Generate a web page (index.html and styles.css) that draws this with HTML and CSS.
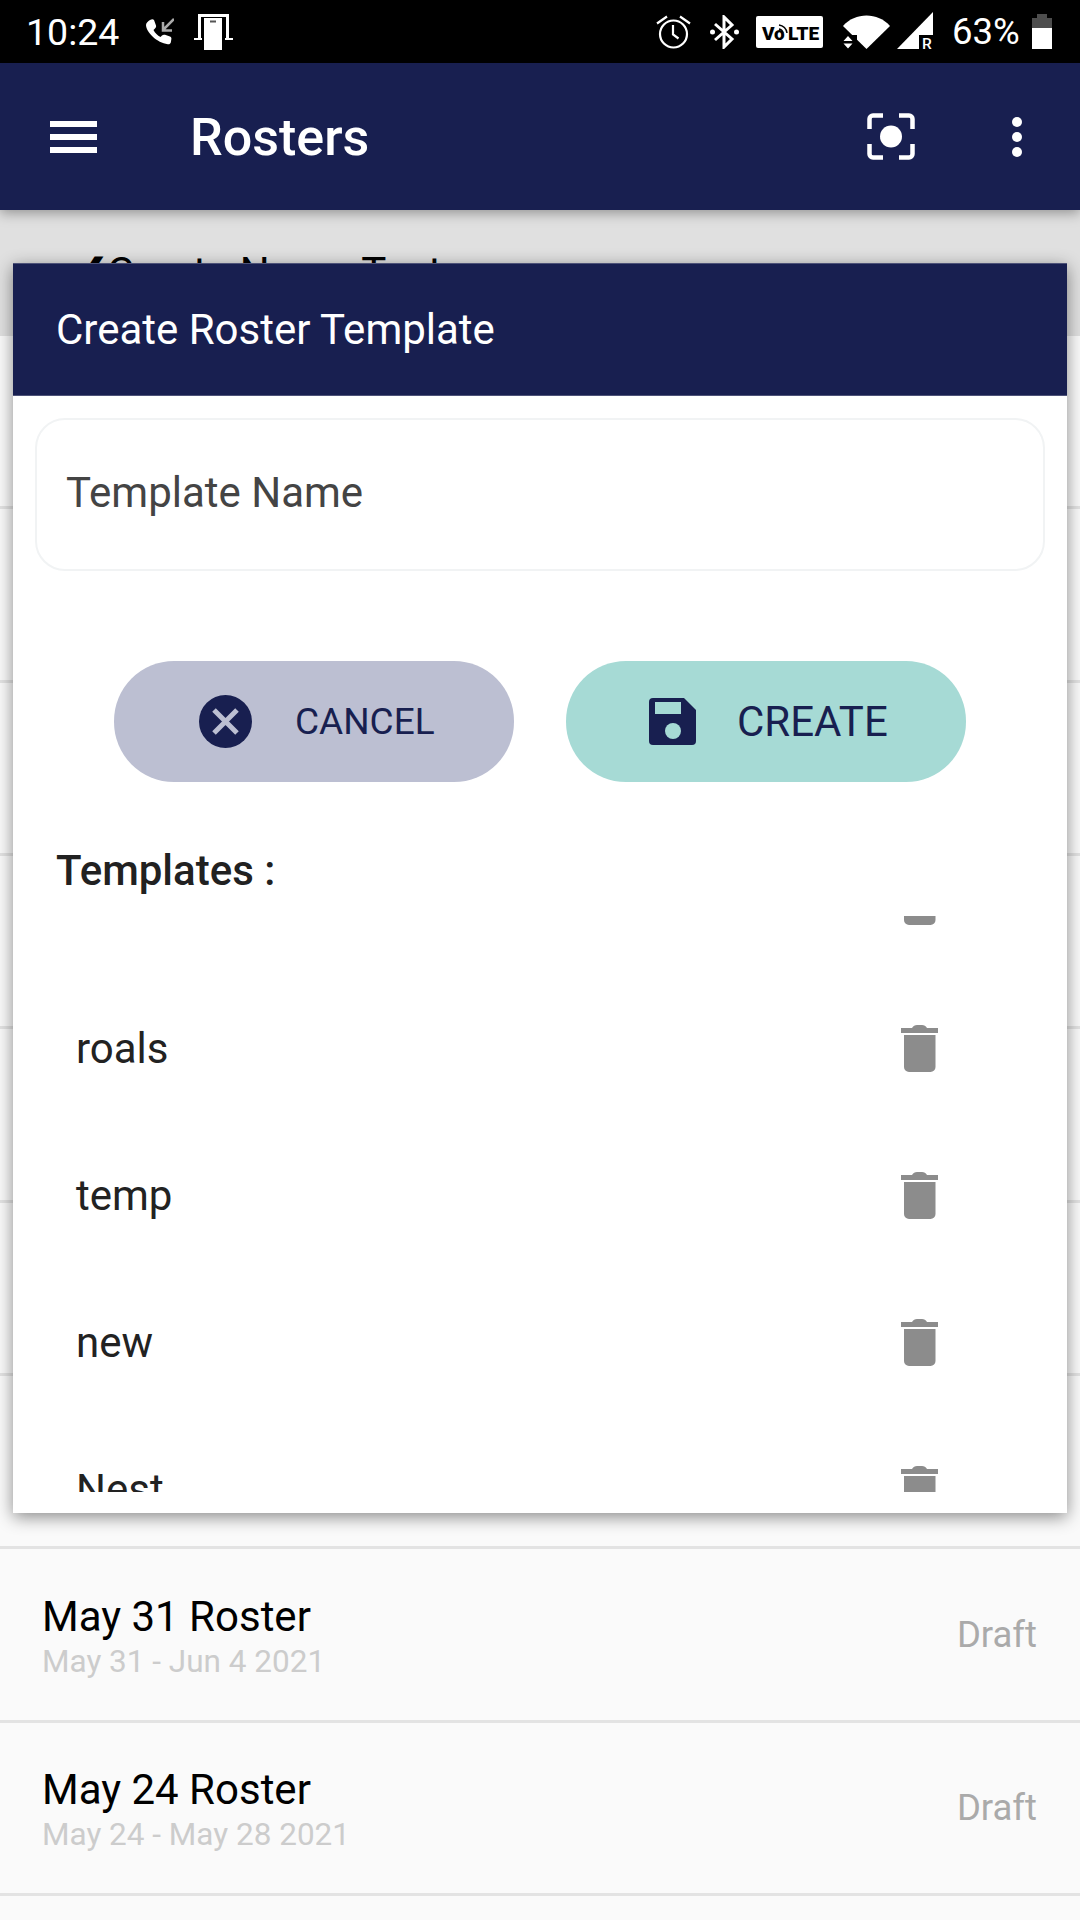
FILE: index.html
```html
<!DOCTYPE html>
<html lang="en">
<head>
    <meta charset="UTF-8">
    <meta name="viewport" content="width=device-width, initial-scale=1.0">
    <title>Rosters</title>
    <link rel="stylesheet" href="styles.css">
</head>
<body>
    <svg class="defs" width="0" height="0">
        <symbol id="trash" viewBox="0 0 37 47">
            <path d="M0 3h11c1-2 3-3 5-3h5c2 0 4 1 5 3h11v5H0z"/>
            <path d="M3 10h31.500v32a5 5 0 0 1-5 5H8a5 5 0 0 1-5-5z"/>
        </symbol>
    </svg>

    <!-- status bar -->
    <div class="status-bar">
        <div class="status-left">
            <span class="clock">10:24</span>
            <svg class="ic-call" width="29" height="28" viewBox="0 0 29 28">
                <path fill="#fff" d="M5 2c2-1 3-1 4 0l2 5.500c.3 1 0 2-1 3l-1.500 1.500c1.500 3 4 5.500 7 7l1.500-1.500c1-1 2-1 3-.7l5 1.700c1.300.5 1.700 1.500 1.300 3l-.5 3c-.5 1.300-1.500 2-3 1.700C12 25 1 14 1 7c0-2 2-4 4-5z"/>
                <path fill="none" stroke="#aaa" stroke-width="2.500" d="M29 1 18 12M18 4v8.500h9"/>
            </svg>
            <svg class="ic-cast" width="39" height="36" viewBox="0 0 39 36">
                <path fill="none" stroke="#fff" stroke-width="3" d="M5.500 24V1.500h28V24"/>
                <path fill="none" stroke="#fff" stroke-width="2" d="M0 25h8M31 25h8"/>
                <rect x="10" y="4" width="18" height="32" fill="#fff"/>
                <rect x="16" y="6.500" width="6" height="2" fill="#555"/>
            </svg>
        </div>
        <div class="status-right">
            <svg class="ic-alarm" width="35" height="35" viewBox="0 0 35 35">
                <g fill="none" stroke="#fff" stroke-width="2.200">
                    <circle cx="17.500" cy="20" r="13.500"/>
                    <path d="M17 11v9.500l5.500 4"/>
                    <path d="M1 9.500 11 2.500M34 9.500 24 2.500"/>
                </g>
            </svg>
            <svg class="ic-bt" width="29" height="34" viewBox="0 0 29 34">
                <path fill="none" stroke="#fff" stroke-width="3" d="M5 9 22 24l-8 8V2l8 8L5 25"/>
                <circle cx="2.500" cy="17" r="2.500" fill="#fff"/>
                <circle cx="26.500" cy="17" r="2.500" fill="#fff"/>
            </svg>
            <svg class="ic-volte" width="67" height="32" viewBox="0 0 67 32">
                <rect width="67" height="32" rx="2" fill="#fff"/>
                <text x="6" y="24" class="volte-text">V</text>
                <text x="18" y="24" class="volte-text">o</text>
                <text x="32" y="24" class="volte-text">LTE</text>
                <path fill="none" stroke="#000" stroke-width="1.500" d="M23 13a5 5 0 0 1 4 4M23 9a9 9 0 0 1 8 8"/>
            </svg>
            <svg class="ic-wifi" width="47" height="34" viewBox="0 0 47 34">
                <path fill="#fff" d="M0 11C12-3 35-3 47 11L23.500 34z"/>
                <path fill="#000" d="M0 20h14v14H0z"/>
                <path fill="#fff" d="M.5 26 5 21l4.500 5zM.5 28.500h9L5 33.500z"/>
            </svg>
            <svg class="ic-signal" width="36" height="37" viewBox="0 0 36 37">
                <path fill="#fff" d="M0 37 36 0v37z"/>
                <rect x="22" y="23" width="14" height="14" fill="#000"/>
                <text x="25" y="37" class="roaming-text">R</text>
            </svg>
            <span class="battery-text">63%</span>
            <div class="battery">
                <div class="battery-nib"></div>
                <div class="battery-empty"></div>
                <div class="battery-fill"></div>
            </div>
        </div>
    </div>

    <!-- app bar -->
    <header class="app-bar">
        <div class="burger">
            <span></span>
            <span></span>
            <span></span>
        </div>
        <h1 class="app-title">Rosters</h1>
        <svg class="ic-scan" width="48" height="47" viewBox="0 0 48 47">
            <g fill="none" stroke="#fff" stroke-width="4.500">
                <path d="M2.500 16V6a3.500 3.500 0 0 1 3.500-3.500h10"/>
                <path d="M32 2.500h10a3.500 3.500 0 0 1 3.500 3.500v10"/>
                <path d="M2.500 31v10a3.500 3.500 0 0 0 3.500 3.500h10"/>
                <path d="M32 44.500h10a3.500 3.500 0 0 0 3.500-3.500V31"/>
            </g>
            <circle cx="24" cy="23.500" r="11" fill="#fff"/>
        </svg>
        <div class="more">
            <span></span>
            <span></span>
            <span></span>
        </div>
    </header>

    <!-- page behind the dialog -->
    <div class="sub-header">
        <span class="chevron">&#10094;</span>Create Name Test
    </div>
    <ul class="rosters">
        <li></li>
        <li></li>
        <li></li>
        <li></li>
        <li></li>
        <li></li>
        <li></li>
        <li>
            <div>
                <div class="roster-name">May 31 Roster</div>
                <div class="roster-dates">May 31 - Jun 4 2021</div>
            </div>
            <span class="roster-state">Draft</span>
        </li>
        <li>
            <div>
                <div class="roster-name">May 24 Roster</div>
                <div class="roster-dates">May 24 - May 28 2021</div>
            </div>
            <span class="roster-state">Draft</span>
        </li>
        <li></li>
    </ul>

    <!-- dialog -->
    <div class="dialog">
        <div class="dialog-head">Create Roster Template</div>
        <input class="name-input" type="text" placeholder="Template Name">

        <div class="actions">
            <button class="btn btn-cancel">
                <svg width="53" height="53" viewBox="0 0 53 53">
                    <circle cx="26.500" cy="26.500" r="26.500" fill="#181f50"/>
                    <path fill="none" stroke="#bcbfd2" stroke-width="5" d="M15 15l23 23M38 15 15 38"/>
                </svg>
                <span>CANCEL</span>
            </button>
            <button class="btn btn-create">
                <svg width="47" height="47" viewBox="0 0 47 47">
                    <path fill="#181f50" d="M4 0h31l12 12v31a4 4 0 0 1-4 4H4a4 4 0 0 1-4-4V4a4 4 0 0 1 4-4z"/>
                    <rect x="6" y="4" width="26" height="12" fill="#a6dad5"/>
                    <circle cx="24" cy="33" r="8" fill="#a6dad5"/>
                </svg>
                <span>CREATE</span>
            </button>
        </div>

        <h2 class="templates-title">Templates :</h2>
        <div class="templates-clip">
            <ul class="templates">
                <li><span></span><svg class="ic-trash"><use href="#trash"/></svg></li>
                <li><span>roals</span><svg class="ic-trash"><use href="#trash"/></svg></li>
                <li><span>temp</span><svg class="ic-trash"><use href="#trash"/></svg></li>
                <li><span>new</span><svg class="ic-trash"><use href="#trash"/></svg></li>
                <li><span>Nest</span><svg class="ic-trash"><use href="#trash"/></svg></li>
            </ul>
        </div>
    </div>
</body>
</html>
```

FILE: styles.css
```css
/* base */
html, body {
    height: 100%;
}

body {
    margin: 0;
    position: relative;
    overflow: hidden;
    font-family: "Roboto", sans-serif;
    background-color: #fafafa;
}

.defs {
    position: absolute;
}

svg {
    display: block;
    flex: none;
}

ul {
    list-style: none;
    margin: 0;
    padding: 0;
}

/* status bar */
.status-bar {
    height: 63px;
    background-color: #000;
    color: #fff;
    display: flex;
    justify-content: space-between;
    align-items: center;
    padding: 0 28px 0 26px;
}

.status-left,
.status-right {
    display: flex;
    align-items: center;
}

.clock {
    font-size: 37.5px;
    width: 93px;
}

.ic-call {
    margin-left: 26px;
}

.ic-cast {
    margin-left: 20px;
}

.ic-bt {
    margin-left: 19px;
}

.ic-volte {
    margin-left: 17px;
}

.ic-wifi {
    margin-left: 20px;
}

.ic-signal {
    margin-left: 7px;
    margin-top: -2px;
}

.volte-text {
    font-family: "Roboto", sans-serif;
    font-size: 19px;
    font-weight: 900;
    fill: #000;
}

.roaming-text {
    font-family: "Roboto", sans-serif;
    font-size: 15.5px;
    font-weight: 500;
    fill: #fff;
}

.battery-text {
    font-size: 36.5px;
    margin-left: 19px;
    width: 67px;
}

.battery {
    width: 20px;
    margin-left: 13px;
    display: flex;
    flex-direction: column;
    align-items: center;
}

.battery-nib {
    width: 10px;
    height: 4px;
    background-color: #4d4d4d;
}

.battery-empty {
    width: 20px;
    height: 10px;
    background-color: #4d4d4d;
}

.battery-fill {
    width: 20px;
    height: 21px;
    background-color: #fff;
}

/* app bar */
.app-bar {
    height: 147px;
    background-color: #181f50;
    color: #fff;
    display: flex;
    align-items: center;
    padding: 0 58px 0 50px;
    position: relative;
    box-shadow: 0 3px 12px rgba(0, 0, 0, 0.35);
}

.burger {
    width: 47px;
    display: flex;
    flex-direction: column;
    gap: 7px;
}

.burger span {
    height: 6px;
    background-color: #fff;
}

.app-title {
    margin: 2px 0 0 93px;
    font-size: 52px;
    font-weight: 500;
}

.ic-scan {
    margin-left: auto;
}

.more {
    margin-left: 97px;
    display: flex;
    flex-direction: column;
    gap: 5px;
}

.more span {
    width: 10px;
    height: 10px;
    border-radius: 50%;
    background-color: #fff;
}

/* page behind the dialog */
.sub-header {
    height: 126px;
    line-height: 126px;
    background-color: #e0e0e0;
    padding-left: 76px;
    font-size: 42px;
    color: #000;
}

.chevron {
    font-size: 40px;
    margin-right: -3px;
}

.rosters li {
    height: 170.33px;
    border-bottom: 3px solid #e3e3e3;
    padding: 0 33px 0 42px;
    display: flex;
    justify-content: space-between;
    align-items: center;
}

.rosters li:last-child {
    height: 24px;
    border-bottom: none;
}

.roster-name {
    margin-top: 8px;
    font-size: 42px;
    line-height: 46px;
    color: #000;
}

.roster-dates {
    font-size: 31.5px;
    line-height: 43px;
    color: #ccc;
}

.roster-state {
    font-size: 36.5px;
    color: #aaa;
    margin-right: 10px;
}

/* dialog */
.dialog {
    position: absolute;
    top: 263px;
    left: 13px;
    width: 1054px;
    height: 1250px;
    background-color: #fff;
    box-shadow: 0 4px 16px rgba(0, 0, 0, 0.45);
}

.dialog-head {
    height: 133px;
    box-sizing: border-box;
    border-top: 1px solid #4d5278;
    border-bottom: 1px solid #4d5278;
    background-color: #181f50;
    color: #fff;
    font-size: 42px;
    line-height: 131px;
    padding-left: 43px;
}

.name-input {
    display: block;
    box-sizing: border-box;
    width: 1010px;
    height: 153px;
    margin: 22px 22px 0;
    padding: 0 29px 5px;
    border: 2px solid #f1f3f4;
    border-radius: 30px;
    outline: none;
    font-family: "Roboto", sans-serif;
    font-size: 42px;
}

.name-input::placeholder {
    color: #444;
    opacity: 1;
}

.actions {
    display: flex;
    justify-content: center;
    gap: 52px;
    margin-top: 90px;
}

.btn {
    width: 400px;
    height: 121px;
    border: none;
    border-radius: 60px;
    padding: 0 0 0 85px;
    display: flex;
    align-items: center;
    font-family: "Roboto", sans-serif;
    color: #181f50;
}

.btn-cancel {
    background-color: #bcbfd2;
    font-size: 37px;
    gap: 43px;
}

.btn-create {
    background-color: #a6dad5;
    font-size: 42px;
    gap: 41px;
    padding-left: 83px;
}

.templates-title {
    margin: 0;
    padding: 65px 0 0 43px;
    height: 69px;
    font-size: 42px;
    line-height: 48px;
    font-weight: 500;
    color: #212121;
}

.templates-clip {
    height: 576px;
    overflow: hidden;
}

.templates {
    margin-top: -88px;
}

.templates li {
    height: 147px;
    padding: 0 129px 0 63px;
    display: flex;
    justify-content: space-between;
    align-items: center;
    font-size: 42px;
    color: #222;
}

.ic-trash {
    width: 37px;
    height: 47px;
    fill: #8c8c8c;
}
```
